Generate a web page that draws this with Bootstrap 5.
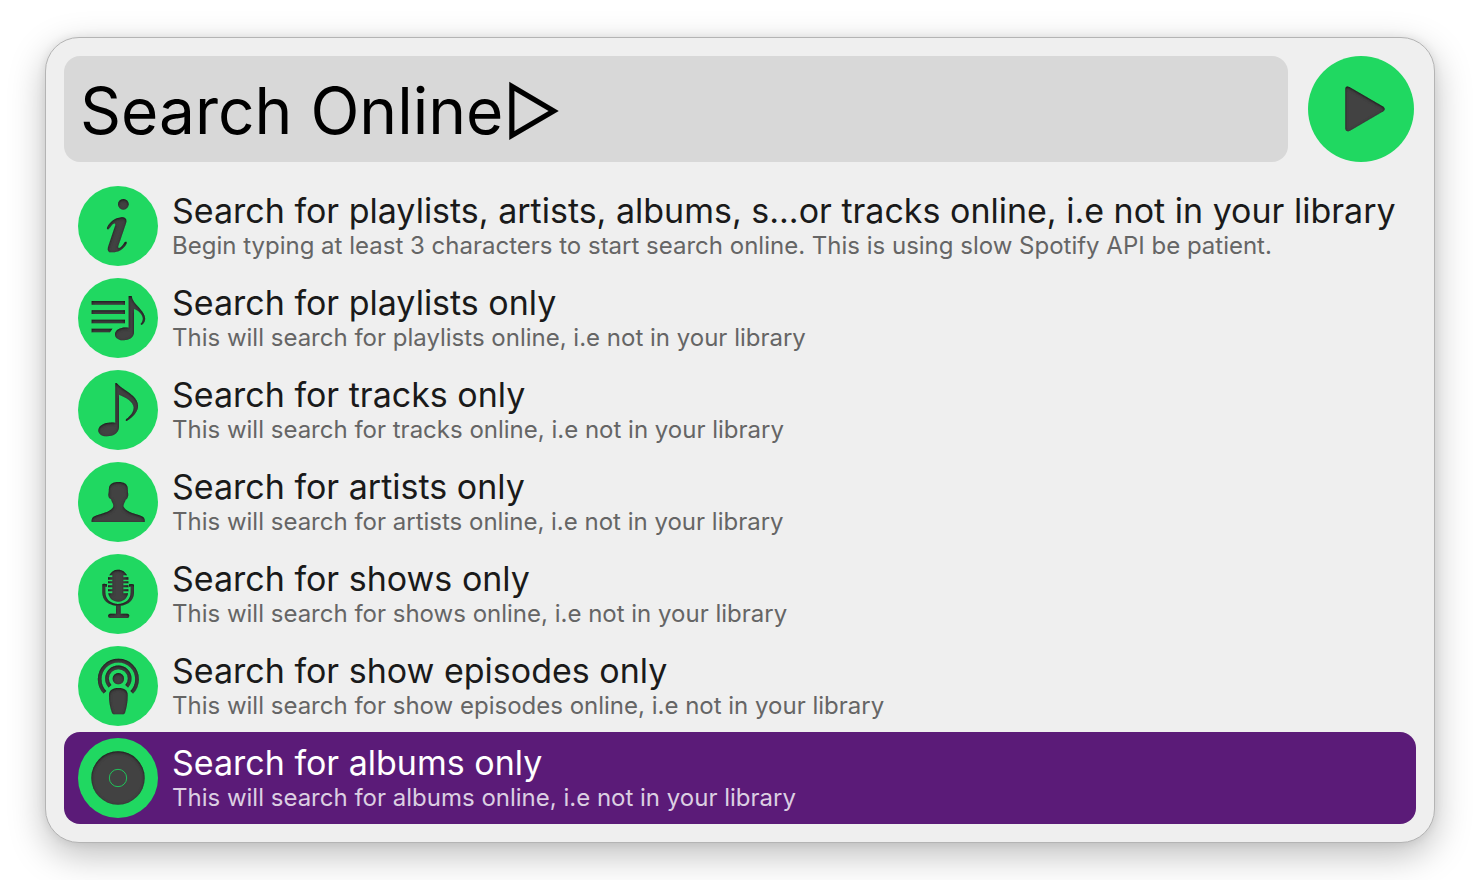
<!DOCTYPE html>
<html lang="en">
<head>
<meta charset="utf-8">
<meta name="viewport" content="width=device-width, initial-scale=1">
<title>Search Online</title>
<link href="https://cdn.jsdelivr.net/npm/bootstrap@5.3.0/dist/css/bootstrap.min.css" rel="stylesheet">
<style>
  body { font-family: Inter, "Liberation Sans", sans-serif; background: #fff; padding: 37px 45px; overflow-x: hidden; }
  .launcher { background: #efefef; border: 1px solid #b4b4b4; border-radius: 34px; padding: 18px; box-shadow: 0 12px 36px rgba(0,0,0,.26), 0 0 10px rgba(0,0,0,.08); }
  .query-row { gap: 20px; }
  .query-box { height: 106px; border: 0; border-radius: 16px; background: #d8d8d8; color: #000; font-size: 64px; font-weight: 400; line-height: 84px; padding: 2px 16px 0; }
  .query-box:focus { background: #d8d8d8; color: #000; box-shadow: none; }
  .go { width: 106px; height: 106px; margin-right: 2px; }
  .results { margin-top: 18px; }
  .results .result { height: 92px; padding: 0 14px; gap: 14px; background: transparent; border: 0; border-radius: 16px; color: #1a1a1a; }
  .results .result.active { margin: 0; background: #5b1b78; color: #fff; }
  .result-icon { width: 80px; height: 80px; }
  .result-title { font-size: 34px; line-height: 40px; }
  .result-note { font-size: 24px; line-height: 30px; color: #656565; }
  .active .result-note { color: #dccfe2; }
  .disc { fill: #20d861; }
  .ink { fill: #434343; filter: url(#inset); }
  .ink-line { fill: none; stroke: #434343; filter: url(#inset); }
</style>
</head>
<body>
<svg width="0" height="0" class="position-absolute" aria-hidden="true">
  <filter id="inset" x="-20%" y="-20%" width="140%" height="140%">
    <feOffset in="SourceAlpha" dx="0" dy="3" result="moved"/>
    <feGaussianBlur in="moved" stdDeviation="4" result="soft"/>
    <feComposite in="SourceAlpha" in2="soft" operator="out" result="edge"/>
    <feFlood flood-color="#000" flood-opacity="1"/>
    <feComposite in2="edge" operator="in" result="shade"/>
    <feMerge><feMergeNode in="SourceGraphic"/><feMergeNode in="shade"/></feMerge>
  </filter>
</svg>
<main class="launcher">
  <form class="d-flex align-items-center query-row" onsubmit="return false">
    <input type="text" class="form-control query-box flex-fill" aria-label="Search" value="Search Online▷">
    <button type="submit" class="btn p-0 border-0 rounded-circle flex-shrink-0 go d-flex" aria-label="Play">
      <svg viewBox="114 108 318 318" width="106" height="106"><circle class="disc" cx="273" cy="267" r="159"/><path class="ink" d="M226 208Q226 196 238 201L340 260Q348 267 340 274L240 332Q227 338 226 325Z"/></svg>
    </button>
  </form>
  <div class="list-group results">
    <button type="button" class="list-group-item list-group-item-action result d-flex align-items-center">
      <svg class="result-icon flex-shrink-0" viewBox="30 30 240 240"><circle class="disc" cx="150" cy="150" r="120"/><circle class="ink" cx="166" cy="85" r="16"/><path class="ink" d="M117 155C125 138 141 126 161 124C171 123 178 129 174 142L151 209C149 216 153 218 158 214C163 210 166 205 170 199C174 195 178 199 175 204C166 221 149 230 130 229C120 229 117 222 121 211L141 151C144 143 140 140 134 145C130 149 127 154 122 159C119 161 116 159 117 155Z"/></svg>
      <span><span class="result-title d-block text-nowrap">Search for playlists, artists, albums, s...or tracks online, i.e not in your library</span><span class="result-note d-block text-nowrap">Begin typing at least 3 characters to start search online. This is using slow Spotify API be patient.</span></span>
    </button>
    <button type="button" class="list-group-item list-group-item-action result d-flex align-items-center">
      <svg class="result-icon flex-shrink-0" viewBox="30 30 240 240"><circle class="disc" cx="150" cy="150" r="120"/><path class="ink" d="M71 99H171V110H71ZM71 127H171V138H71ZM71 155H171V166H71ZM71 182H133L126 193H71Z"/><path class="ink" d="M182 84H191C194 105 211 114 223 131C235 148 234 162 221 171L218 168C228 157 226 144 216 134C210 128 204 125 198 123V193C198 208 184 217 166 217C150 217 140 208 141 197C143 184 160 176 182 179Z"/></svg>
      <span><span class="result-title d-block text-nowrap">Search for playlists only</span><span class="result-note d-block text-nowrap">This will search for playlists online, i.e not in your library</span></span>
    </button>
    <button type="button" class="list-group-item list-group-item-action result d-flex align-items-center">
      <svg class="result-icon flex-shrink-0" viewBox="30 30 240 240"><circle class="disc" cx="150" cy="150" r="120"/><path class="ink" d="M142 70Q144 67 148 71C158 84 181 94 195 108C212 125 214 142 204 157C197 169 187 177 176 183Q171 182 175 177C188 167 198 155 197 141C195 125 176 113 153 104V202C152 219 137 229 116 229C101 229 90 221 91 210C93 195 113 184 142 188Z"/></svg>
      <span><span class="result-title d-block text-nowrap">Search for tracks only</span><span class="result-note d-block text-nowrap">This will search for tracks online, i.e not in your library</span></span>
    </button>
    <button type="button" class="list-group-item list-group-item-action result d-flex align-items-center">
      <svg class="result-icon flex-shrink-0" viewBox="30 30 240 240"><circle class="disc" cx="150" cy="150" r="120"/><path class="ink" d="M71 210C70 198 76 194 87 190C106 184 132 178 136 163C137 155 131 151 129 142C121 139 120 129 122 122L123 108C125 96 136 90 151 90C167 90 178 96 179 108L180 122C182 130 179 140 173 143C171 151 166 155 166 163C171 178 196 185 214 190C226 194 231 198 230 210Z"/></svg>
      <span><span class="result-title d-block text-nowrap">Search for artists only</span><span class="result-note d-block text-nowrap">This will search for artists online, i.e not in your library</span></span>
    </button>
    <button type="button" class="list-group-item list-group-item-action result d-flex align-items-center">
      <svg class="result-icon flex-shrink-0" viewBox="30 30 240 240"><circle class="disc" cx="150" cy="150" r="120"/><path class="ink" d="M124 94C130 83 138 77 150 77C163 77 172 84 177 94H166V100H181V107H166V112H181V118H166V124H181V130H166V136H181V142H166V148H180C177 164 166 173 151 173C135 173 124 164 121 148H133V142H120V136H133V130H120V124H133V118H120V112H133V107H120V100H133V94Z"/><path class="ink" d="M103 121Q107 118 117 121V128H112V145C112 166 127 180 150 180C174 180 188 166 188 145V128H183V121Q193 118 198 122V147C197 169 181 182 158 185V209H178Q184 210 184 215Q183 222 178 222H126Q120 221 120 215Q121 210 126 209H144V185C120 182 104 169 103 147Z"/></svg>
      <span><span class="result-title d-block text-nowrap">Search for shows only</span><span class="result-note d-block text-nowrap">This will search for shows online, i.e not in your library</span></span>
    </button>
    <button type="button" class="list-group-item list-group-item-action result d-flex align-items-center">
      <svg class="result-icon flex-shrink-0" viewBox="30 30 240 240"><circle class="disc" cx="150" cy="150" r="120"/><path class="ink-line" stroke-width="11" d="M111 169A56 56 0 1 1 191 169"/><path class="ink-line" stroke-width="11" d="M126 151A34 34 0 1 1 176 151"/><circle class="ink" cx="151" cy="128" r="17"/><path class="ink" d="M123 178C123 163 135 156 151 156C168 156 179 163 179 178C179 198 176 214 171 230Q169 235 164 235H139Q134 235 132 230C126 214 123 198 123 178Z"/></svg>
      <span><span class="result-title d-block text-nowrap">Search for show episodes only</span><span class="result-note d-block text-nowrap">This will search for show episodes online, i.e not in your library</span></span>
    </button>
    <button type="button" class="list-group-item list-group-item-action result active d-flex align-items-center" aria-current="true">
      <svg class="result-icon flex-shrink-0" viewBox="30 30 240 240"><circle class="disc" cx="150" cy="150" r="120"/><circle class="ink" cx="150" cy="150" r="80"/><circle cx="150" cy="150" r="26" fill="none" stroke="#20c45a" stroke-width="3"/></svg>
      <span><span class="result-title d-block text-nowrap">Search for albums only</span><span class="result-note d-block text-nowrap">This will search for albums online, i.e not in your library</span></span>
    </button>
  </div>
</main>
<script src="https://cdn.jsdelivr.net/npm/bootstrap@5.3.0/dist/js/bootstrap.bundle.min.js"></script>
</body>
</html>
